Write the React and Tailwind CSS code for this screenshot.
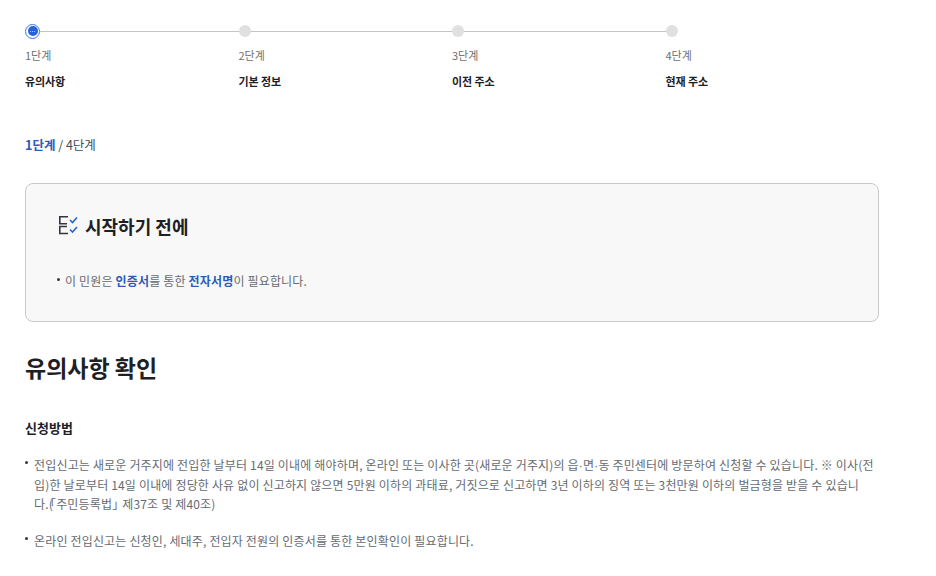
const FONT = '"Noto Sans CJK KR", "Noto Sans", sans-serif'

const STEPS = [
  { num: '1단계', title: '유의사항', current: true },
  { num: '2단계', title: '기본 정보' },
  { num: '3단계', title: '이전 주소' },
  { num: '4단계', title: '현재 주소', last: true },
]

function Step({ num, title, current, last }) {
  return (
    <div className="w-[213.5px]">
      <div className="relative h-[14px] flex items-center">
        {!last && <div className="absolute left-[7px] w-[213.5px] h-px bg-[#c4c4c4]" />}
        {current ? (
          <div className="relative w-[15px] h-[15px] rounded-full border border-[#3b76e8] bg-white flex items-center justify-center">
            <div className="w-[10px] h-[10px] rounded-full bg-[#2563d8] flex items-center justify-center gap-px">
              <span className="w-px h-px bg-[#a9c4f5]" />
              <span className="w-px h-px bg-[#a9c4f5]" />
              <span className="w-px h-px bg-[#a9c4f5]" />
            </div>
          </div>
        ) : (
          <div className="relative w-[12px] h-[12px] rounded-full bg-[#e0e0e0]" />
        )}
      </div>
      <p className="mt-[9px] text-[11px] leading-[16px] text-[#707070]">{num}</p>
      <p className="mt-[10px] text-[11px] leading-[16px] font-bold text-[#1e2124] tracking-[-0.1px]">{title}</p>
    </div>
  )
}

function ChecklistIcon() {
  return (
    <svg width="22" height="22" viewBox="0 0 22 22" fill="none" strokeWidth="1.6">
      <path d="M10 1.8H1.8v7H9M9 11.5H1.8v7H10" stroke="#33363d" />
      <path d="M12 5l2.5 2.5L19 2.5M12 14.5l2.5 2.5 4.5-5" stroke="#2563d8" />
    </svg>
  )
}

function Bullet() {
  return <span className="w-[3px] h-[3px] mt-[6px] rounded-full bg-[#33363d] shrink-0" />
}

// 가운뎃점은 CJK 글꼴에서 너무 넓어서 Liberation Sans로 표시
function Dot() {
  return <span className="font-['Liberation_Sans'] leading-none">·</span>
}

export default function App() {
  return (
    <div className="w-[936px] h-[576px] overflow-hidden bg-white" style={{ fontFamily: FONT }}>
      <div className="w-[854px] ml-[25px] pt-[24px]">
        <div className="flex">
          {STEPS.map((s) => (
            <Step key={s.num} {...s} />
          ))}
        </div>

        <p className="mt-[47px] text-[12.5px] leading-[18px] text-[#464c53]">
          <span className="font-bold text-[#2a5bb8]">1단계</span> / 4단계
        </p>

        <div className="mt-[29px] h-[139px] rounded-[8px] border border-[#c9c9c9] bg-[#f8f8f8] pl-[32px] pt-[27px]">
          <div className="flex items-center gap-[5px]">
            <ChecklistIcon />
            <h2 className="text-[18px] leading-[30px] font-bold text-[#1e2124]">시작하기 전에</h2>
          </div>
          <p className="mt-[31px] ml-[-1px] text-[12px] leading-[18px] text-[#666b72] flex tracking-[0.17px]">
            <Bullet />
            <span className="ml-[5px]">
              이 민원은 <b className="text-[#2a5bb8]">인증서</b>를 통한 <b className="text-[#2a5bb8]">전자서명</b>이 필요합니다.
            </span>
          </p>
        </div>

        <h1 className="mt-[23px] text-[23px] leading-[44px] font-bold text-[#1e2124]">유의사항 확인</h1>

        <h3 className="mt-[29px] text-[13px] leading-[20px] font-bold text-[#1e2124]">신청방법</h3>

        <ul className="mt-[17px] text-[12px] leading-[19.5px] text-[#666b72] tracking-[0.17px]">
          <li className="flex">
            <Bullet />
            <span className="ml-[6px] break-all">
              전입신고는 새로운 거주지에 전입한 날부터 14일 이내에 해야하며, 온라인 또는 이사한 곳(새로운 거주지)의 읍<Dot />면<Dot />동 주민센터에 방문하여 신청할 수 있습니다. ※ 이사(전입)한 날로부터 14일 이내에 정당한 사유 없이 신고하지 않으면 5만원 이하의 과태료, 거짓으로 신고하면 3년 이하의 징역 또는 3천만원 이하의 벌금형을 받을 수 있습니<br />다.(<span className="ml-[-3px]">「</span>주민등록법<span className="mr-[-5px]">」</span> 제37조 및 제40조)
            </span>
          </li>
          <li className="flex mt-[17px]">
            <Bullet />
            <span className="ml-[6px]">온라인 전입신고는 신청인, 세대주, 전입자 전원의 인증서를 통한 본인확인이 필요합니다.</span>
          </li>
        </ul>
      </div>
    </div>
  )
}
